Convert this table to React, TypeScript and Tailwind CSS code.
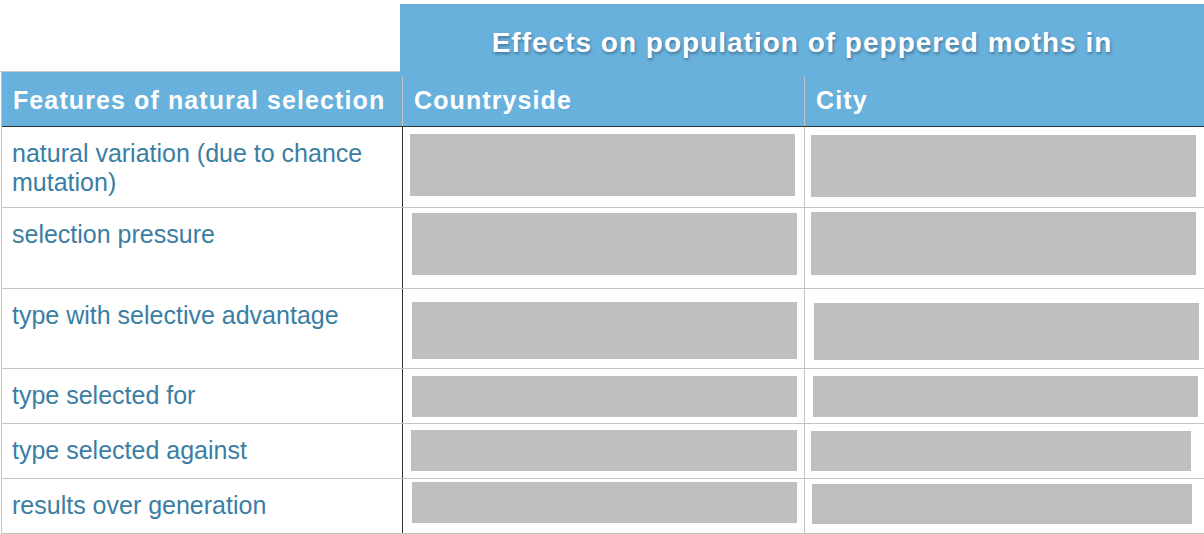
const rows = [
  {
    label: "natural variation (due to chance mutation)",
    h: "h-[81px]",
    a: "ml-[7px] mt-[7px] w-[385px] h-[62px]",
    b: "ml-[6px] mt-[8px] w-[385px] h-[62px]",
  },
  {
    label: "selection pressure",
    h: "h-[81px]",
    a: "ml-[9px] mt-[5px] w-[385px] h-[62px]",
    b: "ml-[6px] mt-[4px] w-[385px] h-[63px]",
  },
  {
    label: "type with selective advantage",
    h: "h-[80px]",
    a: "ml-[9px] mt-[13px] w-[385px] h-[57px]",
    b: "ml-[9px] mt-[14px] w-[385px] h-[57px]",
  },
  {
    label: "type selected for",
    h: "h-[55px]",
    a: "ml-[9px] mt-[7px] w-[385px] h-[41px]",
    b: "ml-[8px] mt-[7px] w-[385px] h-[41px]",
  },
  {
    label: "type selected against",
    h: "h-[55px]",
    a: "ml-[8px] mt-[6px] w-[386px] h-[41px]",
    b: "ml-[6px] mt-[7px] w-[380px] h-[40px]",
  },
  {
    label: "results over generation",
    h: "h-[55px]",
    a: "ml-[9px] mt-[3px] w-[385px] h-[41px]",
    b: "ml-[7px] mt-[5px] w-[380px] h-[40px]",
  },
]

export default function App() {
  return (
    <div
      className="w-[1204px] h-[534px] bg-white overflow-hidden"
      style={{ fontFamily: '"Liberation Sans", Arial, sans-serif' }}
    >
      {/* Title band */}
      <div className="flex h-[72px]">
        <div className="w-[400px] border-b border-[#c8c8c8]" />
        <div className="flex-1 mt-[4px] bg-[#68b1dc] pt-[25px] text-center">
          <h1 className="text-[28px] leading-[28px] font-bold tracking-[1px] text-white [text-shadow:1px_2px_3px_rgba(20,50,80,0.45)]">
            Effects on population of peppered moths in
          </h1>
        </div>
      </div>

      <div className="ml-px border-l border-[#c4c4c4]">
        {/* Column headers */}
        <div className="flex h-[55px] bg-[#68b1dc] border-b border-[#333]">
          <div className="w-[400px] pl-[11px] pt-[16px] text-[25px] leading-[25px] font-bold tracking-[1.1px] text-white">
            Features of natural selection
          </div>
          <div className="w-[402px] flex">
            <div className="w-px h-[49px] self-end bg-[#c4c4c4]" />
            <div className="pl-[11px] pt-[16px] text-[25px] leading-[25px] font-bold tracking-[1.1px] text-white">
              Countryside
            </div>
          </div>
          <div className="flex-1 flex">
            <div className="w-px h-[49px] self-end bg-[#c4c4c4]" />
            <div className="pl-[11px] pt-[16px] text-[25px] leading-[25px] font-bold tracking-[1.1px] text-white">
              City
            </div>
          </div>
        </div>

        {/* Body rows */}
        {rows.map((r) => (
          <div key={r.label} className={`flex border-b border-[#c4c4c4] ${r.h}`}>
            <div className="w-[400px] pl-[10px] pr-[30px] pt-[12px] text-[25px] leading-[29px] text-[#3a7ea3]">
              {r.label}
            </div>
            <div className="w-[402px] border-l border-[#333]">
              <div className={`bg-[#bfbfbf] ${r.a}`} />
            </div>
            <div className="flex-1 border-l border-[#c4c4c4]">
              <div className={`bg-[#bfbfbf] ${r.b}`} />
            </div>
          </div>
        ))}
      </div>
    </div>
  )
}
